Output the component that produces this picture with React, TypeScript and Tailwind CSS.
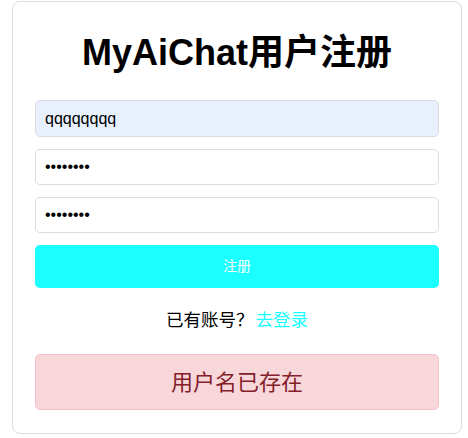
import React, { useState } from "react";

const App: React.FC = () => {
  const [username, setUsername] = useState("qqqqqqqq");
  const [password, setPassword] = useState("12345678");
  const [confirm, setConfirm] = useState("12345678");

  return (
    <div className="bg-white w-[468px] h-[438px] font-['Liberation_Sans','Noto_Sans_CJK_SC',sans-serif]">
      <div className="ml-[12px] mt-[1px] w-[450px] h-[433px] border border-[#dddddd] rounded-lg px-[22px] pt-[32px] flex flex-col">
        <h1 className="text-[36px] leading-[38px] font-bold text-black text-center">MyAiChat用户注册</h1>

        <div className="mt-[28px] flex flex-col gap-[12px]">
          <input
            type="text"
            value={username}
            onChange={(e) => setUsername(e.target.value)}
            className="h-[37px] w-full rounded-[5px] border border-[#dcdcdc] bg-[#e8f0fe] px-[9px] text-[16px] text-black outline-none"
          />
          <input
            type="password"
            value={password}
            onChange={(e) => setPassword(e.target.value)}
            className="h-[36px] w-full rounded-[5px] border border-[#dcdcdc] bg-white px-[9px] text-[16px] text-black outline-none"
          />
          <input
            type="password"
            value={confirm}
            onChange={(e) => setConfirm(e.target.value)}
            className="h-[36px] w-full rounded-[5px] border border-[#dcdcdc] bg-white px-[9px] text-[16px] text-black outline-none"
          />
        </div>

        <button className="mt-[12px] h-[43px] w-full rounded-[5px] bg-[#1affff] text-white text-[14px]">注册</button>

        <p className="mt-[20px] text-center text-[17.5px] leading-[24px] text-black">
          已有账号？<a href="#" className="ml-[2px] text-[#1affff]">去登录</a>
        </p>

        <div className="mt-[22px] h-[56px] rounded-[5px] border border-[#f5c2c7] bg-[#f8d7da] flex items-center justify-center text-[22px] text-[#842029]">
          用户名已存在
        </div>
      </div>
    </div>
  );
};

export default App;
